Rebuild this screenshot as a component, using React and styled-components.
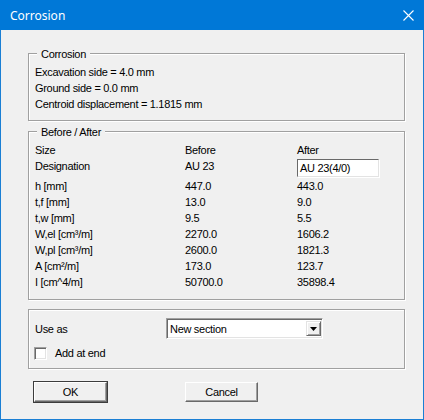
import React from 'react'
import styled, { createGlobalStyle } from 'styled-components'

const Global = createGlobalStyle`
  html, body {
    margin : 0;
    padding : 0;
    background : #f0f0f0;
  }
`
const Window = styled.div`
  width : 424px;
  height : 420px;
  box-sizing : border-box;
  border : 1px solid #1a7fd4;
  border-top : none;
  background : #f0f0f0;
  font-family : "Liberation Sans", Arial, sans-serif;
  font-size : 11px;
  letter-spacing : -0.3px;
  color : #000;
  display : flex;
  flex-direction : column;
`
const TitleBar = styled.div`
  height : 30px;
  margin : 0 -1px;
  background : #0078d7;
  color : white;
  display : flex;
  align-items : center;
  justify-content : space-between;
  padding : 0 10px 0 10px;
  font-family : "Noto Sans", "Open Sans", sans-serif;
  font-size : 12px;
  letter-spacing : 0;
`
const Title = styled.span`
  padding-top : 1px;
`
const Close = styled.svg`
  width : 11px;
  height : 11px;
`
const Client = styled.div`
  flex : 1;
  padding : 23px 18px 0 27px;
  display : flex;
  flex-direction : column;
`
const Group = styled.div`
  position : relative;
  border : 1px solid #a0a0a0;
  box-shadow : 1px 1px 0 #fff, inset 1px 1px 0 #fff;
  padding : ${p => p.$pad};
  margin-bottom : ${p => p.$gap || 0}px;
`
const Caption = styled.span`
  position : absolute;
  top : -8px;
  left : 8px;
  padding : 0 4px;
  line-height : 16px;
  background : #f0f0f0;
`
const Line = styled.div`
  line-height : 16px;
  height : 16px;
`
const Table = styled.div`
  display : grid;
  grid-template-columns : 150px 112px 1fr;
  grid-template-rows : 16px 20px;
  grid-auto-rows : 16px;
  line-height : 16px;
`
const Cell = styled.div`
  white-space : nowrap;
`
const TextBox = styled.div`
  width : 78px;
  height : 16px;
  margin-top : 1px;
  padding : 0 0 0 2px;
  line-height : 16px;
  background : #fff;
  border-top : 1px solid #696969;
  border-left : 1px solid #696969;
  border-right : 1px solid #e3e3e3;
  border-bottom : 1px solid #e3e3e3;
  box-shadow : 1px 1px 0 #fff;
`
const FormRow = styled.div`
  display : flex;
  align-items : center;
  height : ${p => p.$h}px;
  margin-bottom : ${p => p.$gap || 0}px;
`
const Label = styled.span`
  width : 131px;
`
const Select = styled.div`
  width : 151px;
  height : 17px;
  display : flex;
  align-items : center;
  justify-content : space-between;
  background : #fff;
  border-top : 1px solid #a0a0a0;
  border-left : 1px solid #a0a0a0;
  border-right : 1px solid #fff;
  border-bottom : 1px solid #fff;
  box-shadow : inset 1px 1px 0 #696969, inset -1px -1px 0 #e3e3e3;
  padding : 1px 1px 1px 3px;
`
const Arrow = styled.div`
  width : 15px;
  height : 15px;
  box-sizing : border-box;
  background : #f0f0f0;
  border-top : 1px solid #e3e3e3;
  border-left : 1px solid #e3e3e3;
  border-right : 1px solid #696969;
  border-bottom : 1px solid #696969;
  box-shadow : inset 1px 1px 0 #fff, inset -1px -1px 0 #a0a0a0;
  display : flex;
  align-items : center;
  justify-content : center;
`
const Check = styled.span`
  width : 11px;
  height : 11px;
  background : #fff;
  border-top : 1px solid #a0a0a0;
  border-left : 1px solid #a0a0a0;
  border-right : 1px solid #fff;
  border-bottom : 1px solid #fff;
  box-shadow : inset 1px 1px 0 #696969, inset -1px -1px 0 #e3e3e3;
  margin : 0 8px 0 -1px;
`
const Buttons = styled.div`
  display : flex;
  gap : 78px;
  margin : 13px 0 0 6px;
`
const Button = styled.button`
  width : 73px;
  height : 20px;
  box-sizing : border-box;
  padding : 0;
  font : inherit;
  letter-spacing : inherit;
  color : #000;
  background : #f0f0f0;
  border-top : 1px solid #fff;
  border-left : 1px solid #fff;
  border-right : 1px solid #696969;
  border-bottom : 1px solid #696969;
  box-shadow : ${p => p.$default
    ? '0 0 0 1px #3c3c3c, inset -1px -1px 0 #a0a0a0'
    : 'inset -1px -1px 0 #a0a0a0'};
`

const rows = [
  ['h [mm]', '447.0', '443.0'],
  ['t,f [mm]', '13.0', '9.0'],
  ['t,w [mm]', '9.5', '5.5'],
  ['W,el [cm³/m]', '2270.0', '1606.2'],
  ['W,pl [cm³/m]', '2600.0', '1821.3'],
  ['A [cm²/m]', '173.0', '123.7'],
  ['I [cm^4/m]', '50700.0', '35898.4'],
]

const App = () => {
  return (
    <>
      <Global />
      <Window>
        <TitleBar>
          <Title>Corrosion</Title>
          <Close viewBox="0 0 11 11">
            <path d="M0.5 0.5 L10.5 10.5 M10.5 0.5 L0.5 10.5" stroke="#fff" strokeWidth="1.1" />
          </Close>
        </TitleBar>
        <Client>
          <Group $pad="10px 6px 8px 6px" $gap={10}>
            <Caption>Corrosion</Caption>
            <Line>Excavation side = 4.0 mm</Line>
            <Line>Ground side = 0.0 mm</Line>
            <Line>Centroid displacement = 1.1815 mm</Line>
          </Group>
          <Group $pad="10px 6px 9px 6px" $gap={9}>
            <Caption>Before / After</Caption>
            <Table>
              <Cell>Size</Cell>
              <Cell>Before</Cell>
              <Cell>After</Cell>
              <Cell>Designation</Cell>
              <Cell>AU 23</Cell>
              <Cell>
                <TextBox>AU 23(4/0)</TextBox>
              </Cell>
              {rows.map(r => (
                <React.Fragment key={r[0]}>
                  <Cell>{r[0]}</Cell>
                  <Cell>{r[1]}</Cell>
                  <Cell>{r[2]}</Cell>
                </React.Fragment>
              ))}
            </Table>
          </Group>
          <Group $pad="8px 6px 7px 6px">
            <FormRow $h={21} $gap={6}>
              <Label>Use as</Label>
              <Select>
                <span>New section</span>
                <Arrow>
                  <svg width="7" height="4" viewBox="0 0 7 4">
                    <path d="M0 0 H7 L3.5 4 Z" fill="#000" />
                  </svg>
                </Arrow>
              </Select>
            </FormRow>
            <FormRow $h={16}>
              <Check />
              <span>Add at end</span>
            </FormRow>
          </Group>
          <Buttons>
            <Button $default>OK</Button>
            <Button>Cancel</Button>
          </Buttons>
        </Client>
      </Window>
    </>
  )
}

export default App
